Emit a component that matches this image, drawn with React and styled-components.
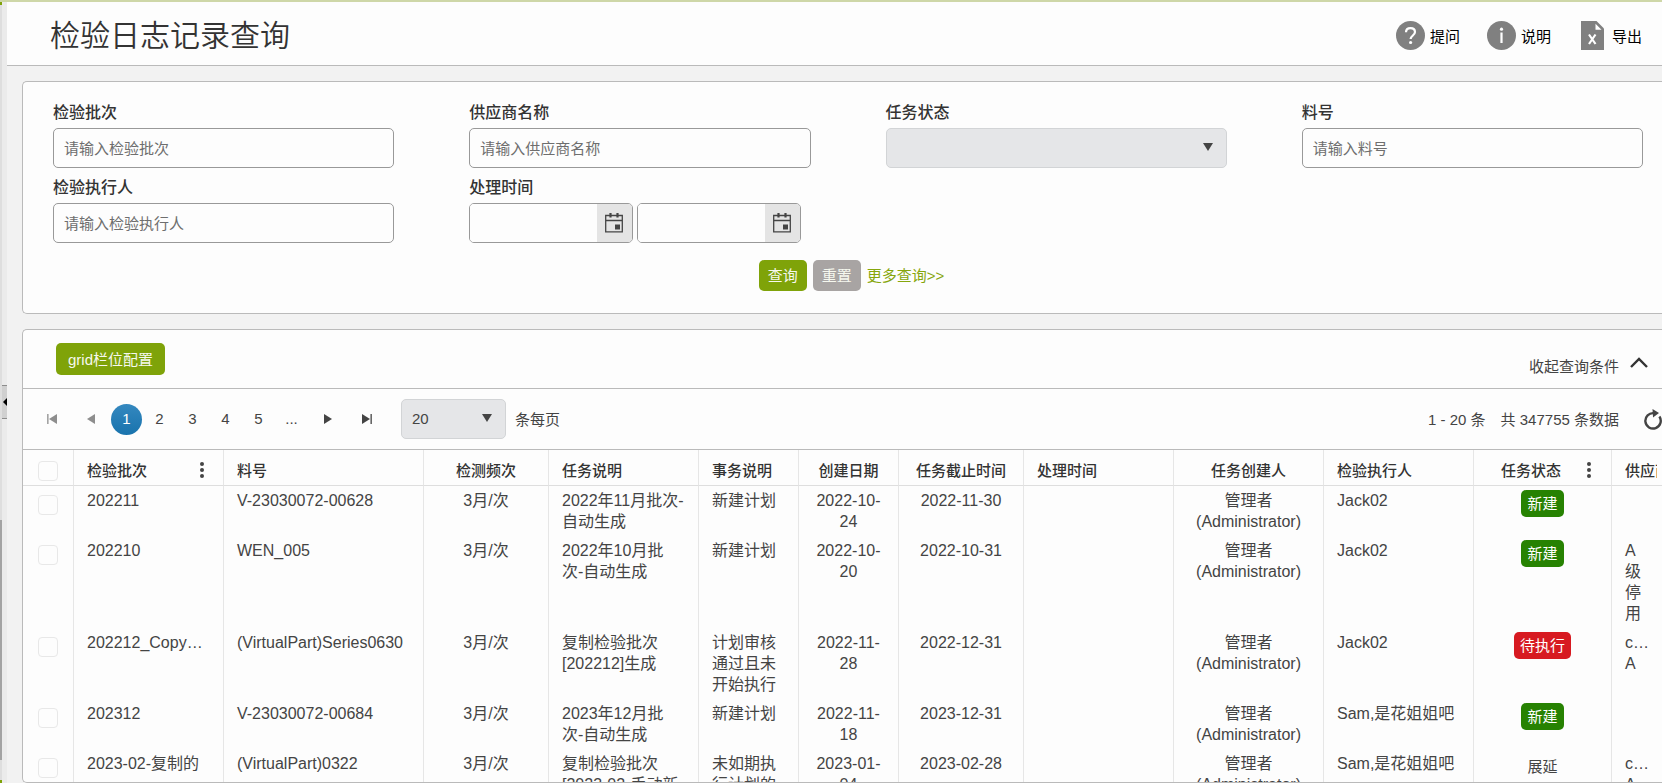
import React from "react";
import styled, { createGlobalStyle, css } from "styled-components";

const Font = `"Liberation Sans", "Noto Sans CJK SC", sans-serif`;
const Surface = "#fdfdfd";
const Border = "#bababa";
const CellBorder = "#e6e6e6";
const Text = "#444";
const Dark = "#333";
const Green = "#7fa309";
const Fill = "#e5e6e8";

const GlobalStyle = createGlobalStyle`
  * {
    box-sizing: border-box;
  }

  body {
    margin: 0;
    background: #f2f2f2;
    color: ${Text};
    font-family: ${Font};
    font-size: 16px;
    overflow: hidden;
  }

  button, input, select {
    font-family: inherit;
    font-size: 15px;
    color: inherit;
  }

  button {
    cursor: pointer;
    padding: 0;
  }
`;

const Page = styled.div`
  height: 100vh;
  display: flex;
  border-top: 2px solid #ced7a8;
`;

const ScrollTrack = styled.div`
  width: 2px;
  display: flex;
  flex-direction: column;
  background: #dedede;
  border-top: 3px solid ${Green};
  border-bottom: 3px solid ${Green};
`;

const ScrollThumb = styled.div`
  height: 31%;
  margin-top: auto;
  margin-bottom: 20px;
  background: #a3a3a3;
`;

const Splitter = styled.div`
  width: 5px;
  padding-top: 18px;
  display: flex;
  align-items: center;
  background: #ebebeb;
`;

const SplitterButton = styled.button`
  width: 5px;
  height: 34px;
  display: flex;
  align-items: center;
  justify-content: flex-end;
  background: #d0d0d0;
  border: solid #8c8c8c;
  border-width: 1px 0;
`;

const Main = styled.main`
  flex: 1;
  min-width: 0;
  display: flex;
  flex-direction: column;
`;

const Header = styled.header`
  height: 64px;
  flex-shrink: 0;
  display: flex;
  align-items: center;
  justify-content: space-between;
  padding: 0 20px 0 43px;
  background: ${Surface};
  border-bottom: 1px solid ${Border};
`;

const Title = styled.h1`
  margin: 0;
  padding-bottom: 2px;
  color: ${Dark};
  font-size: 30px;
  font-weight: 350;
`;

const HeaderActions = styled.div`
  display: flex;
  gap: 27px;
  padding-top: 4px;
`;

const HeaderAction = styled.button`
  display: flex;
  align-items: center;
  gap: 5px;
  background: none;
  border: 0;
  color: #000;
`;

const Content = styled.div`
  flex: 1;
  min-height: 0;
  display: flex;
  flex-direction: column;
  gap: 15px;
  padding: 15px 0 0 15px;
`;

const Panel = styled.section`
  background: ${Surface};
  border: 1px solid ${Border};
  border-right: 0;
  border-radius: 5px 0 0 5px;
`;

const SearchForm = styled.form`
  padding: 18px 19px 22px 30px;
`;

const Fields = styled.div`
  display: grid;
  grid-template-columns: repeat(4, 1fr);
  gap: 7px 75px;
`;

const Field = styled.div`
  display: flex;
  flex-direction: column;
  gap: 2px;
  min-width: 0;
`;

const Label = styled.label`
  color: ${Dark};
  font-size: 16px;
  font-weight: 500;
  line-height: 26px;
`;

const TextInput = styled.input`
  width: 100%;
  height: 40px;
  padding: 0 10px;
  background: ${Surface};
  border: 1px solid #999;
  border-radius: 5px;
  outline: none;

  &::placeholder {
    color: #6e6e6e;
    opacity: 1;
  }
`;

const SelectWrapper = styled.div`
  position: relative;
  width: ${({ $compact }) => ($compact ? "105px" : "100%")};
`;

const Select = styled.select`
  appearance: none;
  display: block;
  width: 100%;
  height: 40px;
  padding: 0 10px 2px;
  background: ${Fill};
  border: 1px solid #d2d4d6;
  border-radius: 5px;
`;

const SelectArrow = styled.svg`
  position: absolute;
  top: 15px;
  right: 14px;
  pointer-events: none;
`;

const DateRange = styled.div`
  display: flex;
  gap: 4px;
  padding-right: 10px;
`;

const DateBox = styled.div`
  flex: 1;
  min-width: 0;
  height: 40px;
  display: flex;
  border: 1px solid #999;
  border-radius: 5px;
  overflow: hidden;
`;

const DateInput = styled.input`
  flex: 1;
  min-width: 0;
  padding: 0 10px;
  background: ${Surface};
  border: 0;
  outline: none;
`;

const DateButton = styled.button`
  width: 35px;
  display: flex;
  align-items: center;
  justify-content: center;
  background: #e4e4e4;
  border: 0;
`;

const FormActions = styled.div`
  display: flex;
  align-items: center;
  justify-content: center;
  gap: 6px;
  margin-top: 17px;
  padding-left: 7px;
`;

const Button = styled.button`
  height: ${({ $large }) => ($large ? "32px" : "31px")};
  padding: 0 ${({ $large }) => ($large ? "12px" : "9px")} 2px;
  background: ${({ $muted }) => ($muted ? "#a8a4a3" : Green)};
  border: 0;
  border-radius: 5px;
  color: #f6f8ef;
`;

const MoreLink = styled.a`
  padding-bottom: 2px;
  color: #86a60c;
  font-size: 15px;
  text-decoration: none;
`;

const GridPanel = styled(Panel)`
  flex: 1;
  min-height: 0;
  display: flex;
  flex-direction: column;
  overflow: hidden;
`;

const Toolbar = styled.div`
  height: 59px;
  flex-shrink: 0;
  display: flex;
  align-items: flex-start;
  justify-content: space-between;
  padding: 13px 14px 0 33px;
  border-bottom: 1px solid ${Border};
`;

const CollapseButton = styled.button`
  display: flex;
  align-items: center;
  gap: 11px;
  padding-top: 12px;
  background: none;
  border: 0;

  svg {
    margin-bottom: 7px;
  }
`;

const Pager = styled.nav`
  height: 61px;
  flex-shrink: 0;
  display: flex;
  align-items: center;
  justify-content: space-between;
  padding-left: 10px;
  border-bottom: 1px solid ${Border};
  font-size: 15px;
`;

const PagerGroup = styled.div`
  display: flex;
  align-items: center;
  gap: ${({ $gap }) => $gap};
`;

const PagerText = styled.span`
  padding-bottom: 2px;
`;

const PageButton = styled.button`
  width: ${({ $nav }) => ($nav ? "37px" : "31px")};
  height: 31px;
  display: flex;
  align-items: center;
  justify-content: center;
  padding-bottom: ${({ $nav }) => ($nav ? "0" : "2px")};
  background: none;
  border: 0;
  border-radius: 50%;
  color: ${({ disabled }) => (disabled ? "#8e8e8e" : Text)};

  ${({ $current }) =>
    $current &&
    css`
      background: linear-gradient(#3488bf, #1973ad);
      color: white;
    `}
`;

const PageSize = styled.div`
  display: flex;
  align-items: center;
  gap: 9px;
  margin-left: 14px;
`;

const RefreshButton = styled.button`
  display: flex;
  margin-left: 9px;
  background: none;
  border: 0;
`;

const TableWrapper = styled.div`
  flex: 1;
  min-height: 0;
  overflow: hidden;
`;

const Table = styled.table`
  width: 100%;
  table-layout: fixed;
  border-collapse: separate;
  border-spacing: 0;
`;

const HeadCell = styled.th`
  height: 36px;
  padding: 7px 5px 0 13px;
  border-left: 1px solid ${CellBorder};
  border-bottom: 1px solid #dedede;
  color: ${Dark};
  font-size: 15px;
  font-weight: 500;
  line-height: 20px;
  white-space: nowrap;
  text-align: left;

  &:first-child {
    border-left: 0;
    padding: 0;
  }
`;

const HeadContent = styled.div`
  display: flex;
  align-items: center;
  justify-content: ${({ $center }) => ($center ? "center" : "flex-start")};
  padding-right: ${({ $center, $menu }) => ($center ? ($menu ? "20px" : "8px") : "0")};
  overflow: hidden;

  svg {
    flex-shrink: 0;
    margin-left: ${({ $center }) => ($center ? "26px" : "auto")};
    margin-right: ${({ $center }) => ($center ? "-19px" : "14px")};
    margin-bottom: 2px;
  }
`;

const Cell = styled.td`
  padding: 4px 12px 4px ${({ $center }) => ($center ? "12px" : "13px")};
  border-left: 1px solid ${CellBorder};
  line-height: 21px;
  vertical-align: top;
  white-space: pre;
  text-align: ${({ $center }) => ($center ? "center" : "left")};

  &:first-child {
    border-left: 0;
    padding: 0;
  }
`;

const Checkbox = styled.input`
  appearance: none;
  display: block;
  width: 20px;
  height: 20px;
  margin: ${({ $head }) => ($head ? "6px" : "9px")} 0 0 15px;
  background: ${Surface};
  border: 1px solid #e8e8e8;
  border-radius: 4px;
`;

const Status = styled.span`
  display: inline-block;
  padding: 3px 6px;
  border-radius: 5px;
  background: ${({ $color }) => $color || "none"};
  color: ${({ $color }) => ($color ? "white" : Text)};
  font-size: 15px;
  line-height: 21px;
`;

const HelpIcon = () => (
  <svg width="29" height="29" viewBox="0 0 29 29" fill="none">
    <circle cx="14.5" cy="14.5" r="14.5" fill="#808080" />
    <path
      d="M10 11.3c0-2.6 1.9-4.2 4.5-4.2s4.5 1.6 4.5 4c0 3.2-4.4 3.6-4.4 7"
      stroke="white"
      strokeWidth="2.2"
    />
    <circle cx="14.6" cy="21.5" r="1.6" fill="white" />
  </svg>
);

const InfoIcon = () => (
  <svg width="29" height="29" viewBox="0 0 29 29">
    <circle cx="14.5" cy="14.5" r="14.5" fill="#808080" />
    <rect x="13.4" y="11.5" width="2.2" height="10.5" fill="white" />
    <circle cx="14.5" cy="8.2" r="1.6" fill="white" />
  </svg>
);

const ExportIcon = () => (
  <svg width="29" height="29" viewBox="-3 0 29 29">
    <path d="M0 0h15.5L23 7.5V29H0z" fill="#808080" />
    <path d="M14.5 2.8v6h6z" fill="white" />
    <path d="M8 13.500l6.500 9.500M14.500 13.500L8 23" stroke="white" strokeWidth="2.200" />
  </svg>
);

const CalendarIcon = () => (
  <svg width="18" height="20" viewBox="0 0 18 20" fill="none">
    <path d="M.7 2.500h16.600v16.300H.7zM.7 7.500h16.600" stroke="#444" strokeWidth="1.300" />
    <path d="M5.500 0v4.500M12.500 0v4.500" stroke="#444" strokeWidth="2.200" />
    <rect x="10" y="11.500" width="5" height="5" fill="#444" />
  </svg>
);

const DownArrow = () => (
  <SelectArrow width="10" height="8" viewBox="0 0 10 8">
    <path d="M0 0h10L5 8z" fill="#444" />
  </SelectArrow>
);

const ChevronUp = () => (
  <svg width="18" height="11" viewBox="0 0 18 11" fill="none">
    <path d="M1 10l8-8 8 8" stroke="#333" strokeWidth="2.4" />
  </svg>
);

const RefreshIcon = () => (
  <svg width="19" height="21" viewBox="0 0 19 21" fill="none">
    <path d="M11 4.200A7.700 7.700 0 1 0 16.400 7.500" stroke="#444" strokeWidth="2.400" />
    <path d="M9.500 0l6.500 4-6 4.500z" fill="#444" />
  </svg>
);

const MenuDots = () => (
  <svg width="4" height="16" viewBox="0 0 4 16" fill="#444">
    <circle cx="2" cy="2" r="2" />
    <circle cx="2" cy="8" r="2" />
    <circle cx="2" cy="14" r="2" />
  </svg>
);

const Triangle = ({ back, end }) => (
  <svg width="10" height="10" viewBox="0 0 10 10" fill="currentColor">
    <g transform={back ? "translate(10 0) scale(-1 1)" : undefined}>
      <path d={end ? "M0 0l8 5-8 5z" : "M1 0l8 5-8 5z"} />
      {end && <rect x="8.500" width="1.300" height="10" />}
    </g>
  </svg>
);

const columns = [
  { title: "检验批次", width: 150, menu: true },
  { title: "料号", width: 200 },
  { title: "检测频次", width: 125, center: true },
  { title: "任务说明", width: 150 },
  { title: "事务说明", width: 100 },
  { title: "创建日期", width: 100, center: true },
  { title: "任务截止时间", width: 125, center: true },
  { title: "处理时间", width: 150 },
  { title: "任务创建人", width: 150, center: true },
  { title: "检验执行人", width: 150 },
  { title: "任务状态", width: 138, center: true, menu: true, status: true },
  { title: "供应商名称" },
];

const admin = "管理者\n(Administrator)";

const rows = [
  ["202211", "V-23030072-00628", "3月/次", "2022年11月批次-\n自动生成", "新建计划", "2022-10-\n24", "2022-11-30", "", admin, "Jack02", "新建", ""],
  ["202210", "WEN_005", "3月/次", "2022年10月批\n次-自动生成", "新建计划", "2022-10-\n20", "2022-10-31", "", admin, "Jack02", "新建", "A\n级\n停\n用"],
  ["202212_Copy…", "(VirtualPart)Series0630", "3月/次", "复制检验批次\n[202212]生成", "计划审核\n通过且未\n开始执行", "2022-11-\n28", "2022-12-31", "", admin, "Jack02", "待执行", "c…\nA"],
  ["202312", "V-23030072-00684", "3月/次", "2023年12月批\n次-自动生成", "新建计划", "2022-11-\n18", "2023-12-31", "", admin, "Sam,是花姐姐吧", "新建", ""],
  ["2023-02-复制的", "(VirtualPart)0322", "3月/次", "复制检验批次\n[2023-02-手动新", "未如期执\n行计划的", "2023-01-\n04", "2023-02-28", "", admin, "Sam,是花姐姐吧", "展延", "c…\nA"],
];

const statusColors = {
  新建: "#278202",
  待执行: "#d71a21",
};

const TextField = ({ id, label }) => (
  <Field>
    <Label htmlFor={id}>{label}</Label>
    <TextInput id={id} placeholder={`请输入${label}`} />
  </Field>
);

const DatePicker = ({ id, label }) => (
  <DateBox>
    <DateInput id={id} aria-label={label} />
    <DateButton type="button" aria-label="选择日期">
      <CalendarIcon />
    </DateButton>
  </DateBox>
);

const SearchPanel = () => (
  <Panel>
    <SearchForm onSubmit={(e) => e.preventDefault()}>
      <Fields>
        <TextField id="batch" label="检验批次" />
        <TextField id="supplier" label="供应商名称" />
        <Field>
          <Label htmlFor="status">任务状态</Label>
          <SelectWrapper>
            <Select id="status">
              <option value=""></option>
              <option>新建</option>
              <option>待执行</option>
              <option>展延</option>
            </Select>
            <DownArrow />
          </SelectWrapper>
        </Field>
        <TextField id="part" label="料号" />
        <TextField id="executor" label="检验执行人" />
        <Field>
          <Label htmlFor="dateFrom">处理时间</Label>
          <DateRange>
            <DatePicker id="dateFrom" label="开始" />
            <DatePicker id="dateTo" label="结束" />
          </DateRange>
        </Field>
      </Fields>

      <FormActions>
        <Button type="submit">查询</Button>
        <Button type="reset" $muted>重置</Button>
        <MoreLink href="#more">更多查询&gt;&gt;</MoreLink>
      </FormActions>
    </SearchForm>
  </Panel>
);

const GridPager = () => (
  <Pager>
    <PagerGroup $gap="2px">
      <PageButton $nav disabled aria-label="首页"><Triangle back end /></PageButton>
      <PageButton $nav disabled aria-label="上一页"><Triangle back /></PageButton>
      {["1", "2", "3", "4", "5", "..."].map((page) => (
        <PageButton key={page} $current={page === "1"}>{page}</PageButton>
      ))}
      <PageButton $nav aria-label="下一页"><Triangle /></PageButton>
      <PageButton $nav aria-label="末页"><Triangle end /></PageButton>
      <PageSize>
        <SelectWrapper $compact>
          <Select id="pageSize" defaultValue="20">
            <option>20</option>
            <option>50</option>
            <option>100</option>
          </Select>
          <DownArrow />
        </SelectWrapper>
        <PagerText as="label" htmlFor="pageSize">条每页</PagerText>
      </PageSize>
    </PagerGroup>

    <PagerGroup $gap="15px">
      <PagerText>1 - 20 条</PagerText>
      <PagerText>共 347755 条数据</PagerText>
      <RefreshButton aria-label="刷新"><RefreshIcon /></RefreshButton>
    </PagerGroup>
  </Pager>
);

const Grid = () => (
  <TableWrapper>
    <Table>
      <colgroup>
        <col width="50" />
        {columns.map(({ title, width }) => (
          <col key={title} width={width} />
        ))}
      </colgroup>
      <thead>
        <tr>
          <HeadCell><Checkbox type="checkbox" aria-label="全选" $head /></HeadCell>
          {columns.map(({ title, center, menu }) => (
            <HeadCell key={title}>
              <HeadContent $center={center} $menu={menu}>
                {title}
                {menu && <MenuDots />}
              </HeadContent>
            </HeadCell>
          ))}
        </tr>
      </thead>
      <tbody>
        {rows.map((row) => (
          <tr key={row[0]}>
            <Cell><Checkbox type="checkbox" aria-label={row[0]} /></Cell>
            {row.map((value, i) => (
              <Cell key={columns[i].title} $center={columns[i].center}>
                {columns[i].status ? <Status $color={statusColors[value]}>{value}</Status> : value}
              </Cell>
            ))}
          </tr>
        ))}
      </tbody>
    </Table>
  </TableWrapper>
);

const App = () => (
  <Page>
    <GlobalStyle />
    <ScrollTrack>
      <ScrollThumb />
    </ScrollTrack>
    <Splitter>
      <SplitterButton aria-label="收起菜单">
        <svg width="4" height="8" viewBox="0 0 4 8"><path d="M4 0v8L0 4z" /></svg>
      </SplitterButton>
    </Splitter>

    <Main>
      <Header>
        <Title>检验日志记录查询</Title>
        <HeaderActions>
          <HeaderAction><HelpIcon />提问</HeaderAction>
          <HeaderAction><InfoIcon />说明</HeaderAction>
          <HeaderAction><ExportIcon />导出</HeaderAction>
        </HeaderActions>
      </Header>

      <Content>
        <SearchPanel />
        <GridPanel>
          <Toolbar>
            <Button $large>grid栏位配置</Button>
            <CollapseButton>收起查询条件<ChevronUp /></CollapseButton>
          </Toolbar>
          <GridPager />
          <Grid />
        </GridPanel>
      </Content>
    </Main>
  </Page>
);

export default App;
